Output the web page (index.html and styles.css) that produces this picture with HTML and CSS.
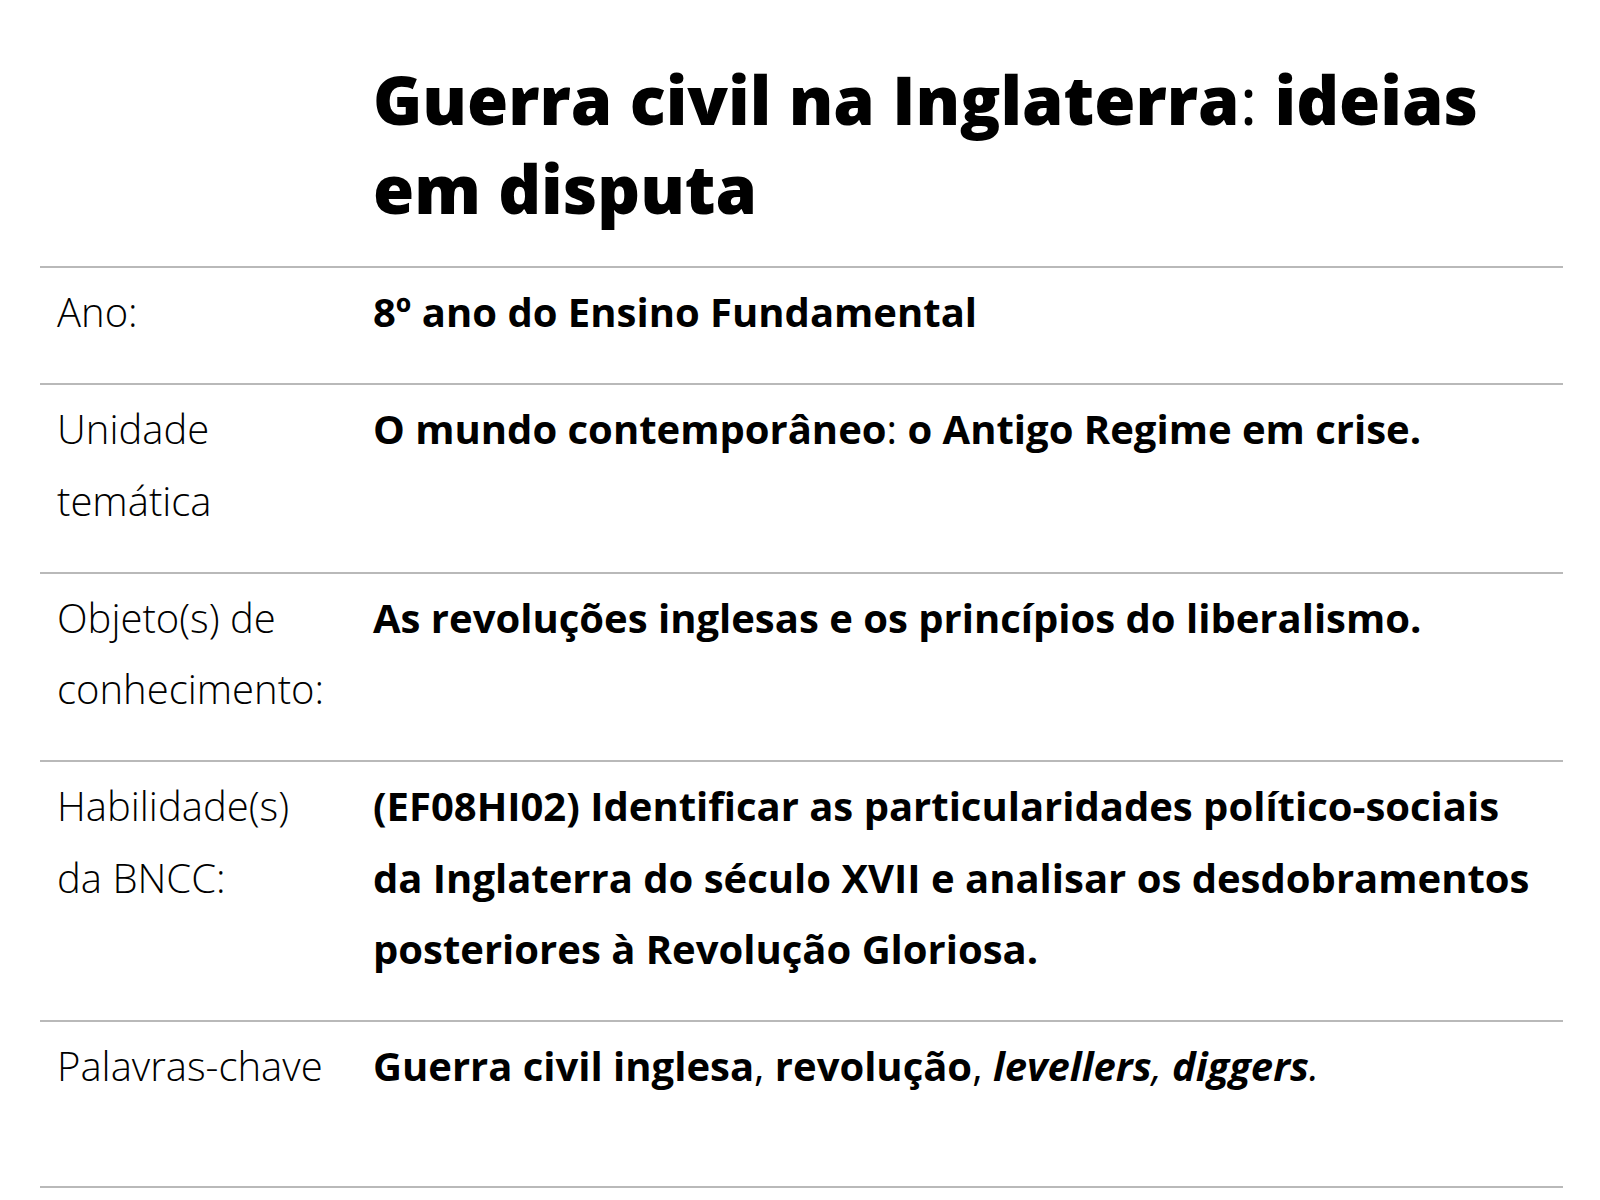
FILE: index.html
```html
<!DOCTYPE html>
<html lang="pt-BR">
<head>
<meta charset="utf-8">
<title>Guerra civil na Inglaterra: ideias em disputa</title>
<link rel="stylesheet" href="styles.css">
</head>
<body>
<main class="page">
  <header class="head">
    <h1 class="title"><strong>Guerra civil na Inglaterra</strong>: <strong>ideias em disputa</strong></h1>
  </header>
  <section class="info">
    <div class="row">
      <div class="label">Ano:</div>
      <div class="value"><strong>8º ano do Ensino Fundamental</strong></div>
    </div>
    <div class="row">
      <div class="label">Unidade temática</div>
      <div class="value"><strong>O mundo contemporâneo</strong>: <strong>o Antigo Regime em crise.</strong></div>
    </div>
    <div class="row">
      <div class="label">Objeto(s) de conhecimento:</div>
      <div class="value"><strong>As revoluções inglesas e os princípios do liberalismo.</strong></div>
    </div>
    <div class="row">
      <div class="label">Habilidade(s) da BNCC:</div>
      <div class="value"><strong>(EF08HI02) Identificar as particularidades político-sociais da Inglaterra do século XVII e analisar os desdobramentos posteriores à Revolução Gloriosa.</strong></div>
    </div>
    <div class="row row-last">
      <div class="label">Palavras-chave</div>
      <div class="value"><strong>Guerra civil inglesa</strong>, <strong>revolução</strong>, <strong><em>levellers</em></strong><em>, </em><strong><em>diggers</em></strong><em>.</em></div>
    </div>
  </section>
</main>
</body>
</html>
```
FILE: styles.css
```css
html, body {
  margin: 0;
  padding: 0;
  background: #ffffff;
}

body {
  font-family: "Open Sans", "Noto Sans", sans-serif;
  color: #000000;
}

.page {
  padding: 0 37px 0 40px;
}

.head {
  display: grid;
  grid-template-columns: 333px 1fr;
  padding-top: 55px;
  padding-bottom: 33px;
}

.title {
  grid-column: 2;
  margin: 0;
  padding-right: 40px;
  font-size: 66.7px;
  line-height: 89px;
  font-weight: 400;
}

.title strong {
  font-weight: 800;
}

.info {
  display: flex;
  flex-direction: column;
  border-bottom: 2px solid #b9b9b9;
}

.row {
  display: grid;
  grid-template-columns: 333px 1fr;
  border-top: 2px solid #b9b9b9;
  padding: 8px 0 36px;
  font-size: 40px;
  line-height: 71.3px;
}

.row-last {
  padding-bottom: 84px;
}

.label {
  padding-left: 17px;
  padding-right: 44px;
  font-weight: 300;
}

.value {
  padding-right: 20px;
  font-weight: 400;
}

.value strong {
  font-weight: 700;
}
```
